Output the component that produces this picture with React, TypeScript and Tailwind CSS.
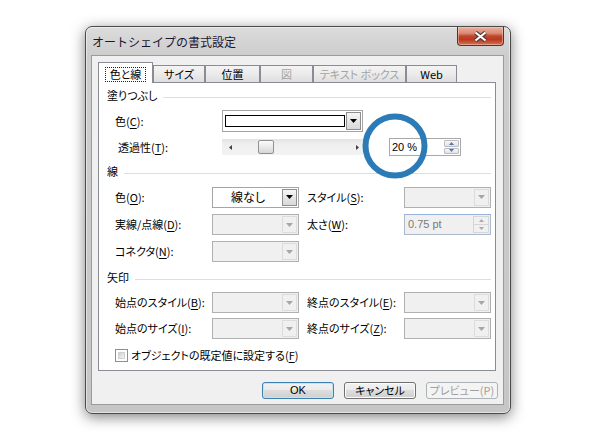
import React from "react";

const TriDown = ({ c = "#000" }: { c?: string }) => (
  <svg width="7" height="4" viewBox="0 0 7 4">
    <path d="M0 0H7L3.5 4Z" fill={c} />
  </svg>
);
const TriUp = ({ c = "#000" }: { c?: string }) => (
  <svg width="7" height="4" viewBox="0 0 7 4">
    <path d="M0 4H7L3.5 0Z" fill={c} />
  </svg>
);
const SmallUp = ({ c }: { c: string }) => (
  <svg width="5" height="3" viewBox="0 0 5 3">
    <path d="M0 3H5L2.5 0Z" fill={c} />
  </svg>
);
const SmallDown = ({ c }: { c: string }) => (
  <svg width="5" height="3" viewBox="0 0 5 3">
    <path d="M0 0H5L2.5 3Z" fill={c} />
  </svg>
);

const DropBtn = () => (
  <div className="flex w-[15px] items-center justify-center border border-[#8e8e8e] bg-[linear-gradient(#f6f6f6,#e6e6e6_50%,#d8d8d8)]">
    <TriDown />
  </div>
);

const DisabledCombo = () => (
  <div className="flex h-[21px] w-[87px] border border-[#b0b0b0] bg-[#f0f0f0]">
    <div className="flex-1" />
    <div className="m-px flex w-[15px] items-center justify-center border border-[#dcdcdc]">
      <TriDown c="#a6a6a6" />
    </div>
  </div>
);

const EnabledCombo = () => (
  <div className="flex h-[21px] w-[87px] border border-[#a5a5a5] bg-white p-px">
    <div className="flex flex-1 items-center justify-center text-[12px] leading-none">線なし</div>
    <DropBtn />
  </div>
);

const ColorCombo = () => (
  <div className="flex h-[22px] w-[141px] border border-[#a5a5a5] bg-white p-px">
    <div className="flex-1 px-[1px] py-[3px]">
      <div className="h-full border border-black bg-white" />
    </div>
    <DropBtn />
  </div>
);

const ThickSpin = () => (
  <div className="flex h-[21px] w-[87px] border border-[#abb8cb] border-t-[#97b3dc] bg-[#f0f0f0]">
    <div className="flex flex-1 items-center pl-[3px] font-['Liberation_Sans',sans-serif] text-[11px] leading-none text-[#7a7a7a]">
      0.75 pt
    </div>
    <div className="m-px flex w-[16px] flex-col border border-[#d6d6d6]">
      <div className="flex flex-1 items-center justify-center border-b border-[#d6d6d6]">
        <SmallUp c="#a8a8a8" />
      </div>
      <div className="flex flex-1 items-center justify-center">
        <SmallDown c="#a8a8a8" />
      </div>
    </div>
  </div>
);

const PctSpin = () => (
  <div className="flex h-[18px] w-[72px] border border-[#a8a8a8] bg-white">
    <div className="flex flex-1 items-center pl-[2px] font-['Liberation_Sans',sans-serif] text-[11px] leading-none">
      20 %
    </div>
    <div className="m-px flex w-[15px] flex-col gap-px">
      <div className="flex flex-1 items-center justify-center rounded-[1px] border border-[#b9bcc2] bg-[linear-gradient(#f8f8f8,#e2e2e2)]">
        <SmallUp c="#5574ad" />
      </div>
      <div className="flex flex-1 items-center justify-center rounded-[1px] border border-[#b9bcc2] bg-[linear-gradient(#f8f8f8,#e2e2e2)]">
        <SmallDown c="#5574ad" />
      </div>
    </div>
  </div>
);

const Track = () => (
  <div className="flex h-[16px] w-[141px] items-center bg-[linear-gradient(#e4e4e4,#efefef_35%,#f3f3f3)]">
    <div className="ml-[6px] flex w-[4px] justify-center">
      <svg width="3" height="5" viewBox="0 0 3 5">
        <path d="M3 0V5L0 2.5Z" fill="#404040" />
      </svg>
    </div>
    <div className="ml-[26px] h-[14px] w-[16px] rounded-[2px] border border-[#8f9193] bg-[linear-gradient(#fbfbfb,#e9e9e9_50%,#d6d6d6)]" />
    <div className="flex-1" />
    <div className="mr-[4px] flex w-[4px] justify-center">
      <svg width="3" height="5" viewBox="0 0 3 5">
        <path d="M0 0V5L3 2.5Z" fill="#404040" />
      </svg>
    </div>
  </div>
);

const U = ({ children }: { children: React.ReactNode }) => <span className="underline underline-offset-[2px]">{children}</span>;

const Header = ({ t, h }: { t: string; h: string }) => (
  <div className={`flex items-center pl-[8px] pr-[4px] ${h}`}>
    <span className="leading-none">{t}</span>
    <div className="ml-[6px] mt-[3px] h-px flex-1 bg-[#d7e0e7]" />
  </div>
);

const Label = ({ children, w = "w-[97px]" }: { children: React.ReactNode; w?: string }) => (
  <div className={`shrink-0 leading-none ${w}`}>{children}</div>
);

const Tab = ({
  label,
  w,
  selected,
  disabled,
}: {
  label: string;
  w: string;
  selected?: boolean;
  disabled?: boolean;
}) =>
  selected ? (
    <div className={`-mb-px flex h-[21px] items-start justify-center border border-b-0 border-[#898c95] bg-white pt-[4px] ${w}`}>
      <div className="border border-dotted border-[#222] px-[4px] pb-[1px] leading-[12px]">{label}</div>
    </div>
  ) : (
    <div
      className={`flex h-[17px] items-center justify-center border border-b-0 border-[#898c95] bg-[linear-gradient(#f4f4f4,#ebebeb_50%,#dedede)] leading-none ${w} ${
        disabled ? "text-[#a3a3a3]" : "text-black"
      }`}
    >
      {label}
    </div>
  );

const CloseBtn = () => (
  <div className="flex h-[19px] w-[47px] items-center justify-center rounded-b-[4px] border border-t-0 border-[#6b2a1e] bg-[linear-gradient(#eab0a0,#d98a74_35%,#c2462c_50%,#b8391f_70%,#d2735a)] shadow-[inset_0_0_0_1px_rgba(255,220,210,0.45)]">
    <svg width="15" height="11" viewBox="0 0 15 11">
      <path d="M2.5 1.5L12.5 9.5M12.5 1.5L2.5 9.5" stroke="#4c3a3a" strokeWidth="4.2" />
      <path d="M2.5 1.5L12.5 9.5M12.5 1.5L2.5 9.5" stroke="#ffffff" strokeWidth="2.2" />
    </svg>
  </div>
);

const Button = ({ children, kind }: { children: React.ReactNode; kind: "def" | "norm" | "dis" }) => {
  if (kind === "def")
    return (
      <div className="flex h-[17px] w-[72px] items-center justify-center rounded-[3px] border border-[#3c7fb1] bg-[linear-gradient(#f2f2f2,#ebebeb_45%,#dddddd_50%,#cfcfcf)] font-['Liberation_Sans',sans-serif] text-[11px] leading-none shadow-[inset_0_0_0_1px_#c4e5f6]">
        {children}
      </div>
    );
  if (kind === "norm")
    return (
      <div className="flex h-[17px] w-[72px] items-center justify-center rounded-[3px] border border-[#707070] bg-[linear-gradient(#f2f2f2,#ebebeb_45%,#dddddd_50%,#cfcfcf)] leading-none shadow-[inset_0_0_0_1px_#fcfcfc]">
        {children}
      </div>
    );
  return (
    <div className="flex h-[17px] w-[72px] items-center justify-center rounded-[3px] border border-[#adb2b5] bg-[#f4f4f4] leading-none text-[#a0a0a0]">
      {children}
    </div>
  );
};

export default function App() {
  return (
    <div className="relative h-[440px] w-[592px] overflow-hidden bg-white pl-[85px] pt-[26px] font-['Noto_Sans_CJK_JP',sans-serif] text-[11px] text-black [font-feature-settings:'palt']">
      <div className="flex h-[388px] w-[426px] flex-col rounded-[7px] border border-[#4a4a4a] bg-[linear-gradient(#dcdcdc,#cdcdcd_28px,#c6c6c6)] shadow-[0_3px_14px_rgba(0,0,0,0.5),inset_0_0_0_1px_rgba(255,255,255,0.5)]">
        {/* title bar */}
        <div className="flex h-[28px] shrink-0 items-start justify-between pl-[6px] pr-[6px]">
          <span className="mt-[7px] text-[12px] leading-[16px] text-[#1b1530] [font-feature-settings:normal]">
            オートシェイプの書式設定
          </span>
          <CloseBtn />
        </div>
        {/* client */}
        <div className="ml-[5px] mr-[6px] flex h-[350px] flex-col border border-[#9b9b9b] bg-[#f0f0f0]">
          {/* tabs */}
          <div className="relative z-10 mt-[6px] flex h-[20px] items-end pl-[6px]">
            <Tab label="色と線" w="w-[55px]" selected />
            <Tab label="サイズ" w="w-[52px]" />
            <Tab label="位置" w="w-[55px]" />
            <Tab label="図" w="w-[53px]" disabled />
            <Tab label="テキスト ボックス" w="w-[93px]" disabled />
            <Tab label="Web" w="w-[51px]" />
          </div>
          {/* panel */}
          <div className="ml-[6px] flex h-[289px] w-[398px] flex-col border border-[#898c95] bg-white">
            <Header t="塗りつぶし" h="h-[25px]" />
            <div className="flex h-[26px] items-center pl-[16px]">
              <Label w="w-[107px]">
                色(<U>C</U>):
              </Label>
              <ColorCombo />
            </div>
            <div className="flex h-[26px] items-center pl-[19px]">
              <Label w="w-[104px]">
                透過性(<U>T</U>):
              </Label>
              <Track />
              <div className="ml-[26px]">
                <PctSpin />
              </div>
            </div>
            <Header t="線" h="h-[23px]" />
            <div className="flex h-[28px] items-center pl-[16px]">
              <Label>
                色(<U>O</U>):
              </Label>
              <EnabledCombo />
              <div className="ml-[8px]">
                <Label>
                  スタイル(<U>S</U>):
                </Label>
              </div>
              <DisabledCombo />
            </div>
            <div className="flex h-[27px] items-center pl-[16px]">
              <Label>
                実線/点線(<U>D</U>):
              </Label>
              <DisabledCombo />
              <div className="ml-[8px]">
                <Label>
                  太さ(<U>W</U>):
                </Label>
              </div>
              <ThickSpin />
            </div>
            <div className="flex h-[27px] items-center pl-[16px]">
              <Label>
                コネクタ(<U>N</U>):
              </Label>
              <DisabledCombo />
            </div>
            <Header t="矢印" h="h-[25px]" />
            <div className="flex h-[25px] items-center pl-[16px]">
              <Label>
                始点のスタイル(<U>B</U>):
              </Label>
              <DisabledCombo />
              <div className="ml-[8px]">
                <Label>
                  終点のスタイル(<U>E</U>):
                </Label>
              </div>
              <DisabledCombo />
            </div>
            <div className="flex h-[27px] items-center pl-[16px]">
              <Label>
                始点のサイズ(<U>I</U>):
              </Label>
              <DisabledCombo />
              <div className="ml-[8px]">
                <Label>
                  終点のサイズ(<U>Z</U>):
                </Label>
              </div>
              <DisabledCombo />
            </div>
            <div className="flex h-[26px] items-center pl-[16px]">
              <div className="h-[13px] w-[13px] border border-[#8e8f8f] bg-white p-[2px]">
                <div className="h-full w-full border border-[#d0d0d0] bg-[linear-gradient(135deg,#cfcfcf,#f4f4f4)]" />
              </div>
              <span className="ml-[3px] leading-none">
                オブジェクトの既定値に設定する(<U>F</U>)
              </span>
            </div>
          </div>
          {/* buttons */}
          <div className="mt-[11px] flex justify-end gap-[10px] pr-[5px]">
            <Button kind="def">OK</Button>
            <Button kind="norm">キャンセル</Button>
            <Button kind="dis">プレビュー(P)</Button>
          </div>
        </div>
      </div>
      <svg className="absolute left-[362px] top-[113px]" width="66" height="66" viewBox="0 0 66 66">
        <circle cx="33" cy="33" r="29.5" fill="none" stroke="#2b7cb6" strokeWidth="6" />
      </svg>
    </div>
  );
}
